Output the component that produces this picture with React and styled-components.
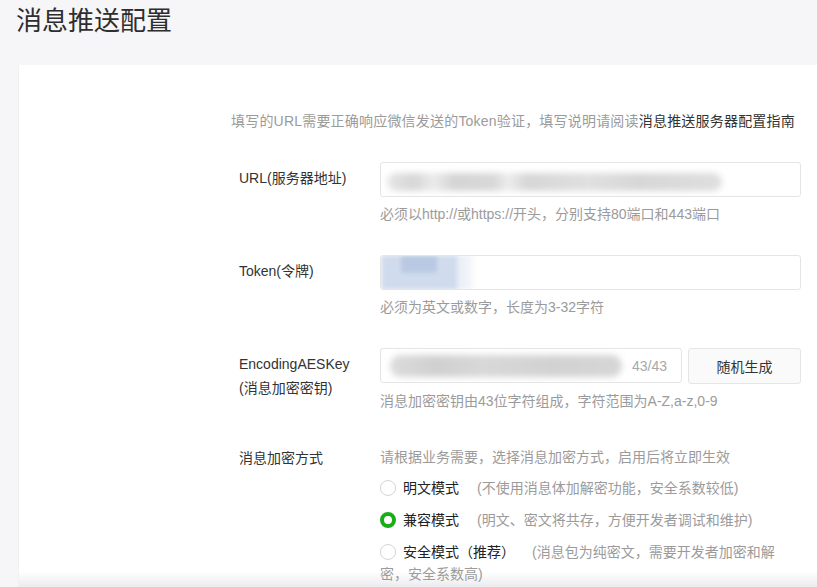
import React from 'react';
import styled, { createGlobalStyle } from 'styled-components';

const colors = {
  page: '#f6f6f8',
  text: '#333333',
  dark: '#222222',
  hint: '#9b9b9b',
  border: '#e5e5e5',
  green: '#1aad19',
};

const GlobalStyle = createGlobalStyle`
  html, body {
    margin: 0;
    padding: 0;
    background: ${colors.page};
    font-family: "Liberation Sans", "Noto Sans CJK SC", sans-serif;
    color: ${colors.text};
  }
`;

const modes = [
  { name: '明文模式', desc: '(不使用消息体加解密功能，安全系数较低)', checked: false, gap: 18 },
  { name: '兼容模式', desc: '(明文、密文将共存，方便开发者调试和维护)', checked: true, gap: 18 },
  {
    name: '安全模式（推荐）',
    desc: '(消息包为纯密文，需要开发者加密和解',
    rest: '密，安全系数高)',
    checked: false,
    gap: 17,
  },
];

const App = () => (
  <Page>
    <GlobalStyle />
    <Title>消息推送配置</Title>
    <Card>
      <Intro>
        填写的URL需要正确响应微信发送的Token验证，填写说明请阅读
        <Link>消息推送服务器配置指南</Link>
      </Intro>

      <Row>
        <Label>URL(服务器地址)</Label>
        <Field>
          <Input>
            <Blur $kind="url" />
          </Input>
          <Hint>必须以http://或https://开头，分别支持80端口和443端口</Hint>
        </Field>
      </Row>

      <Row>
        <Label>Token(令牌)</Label>
        <Field>
          <Input>
            <Blur $kind="token" />
          </Input>
          <Hint>必须为英文或数字，长度为3-32字符</Hint>
        </Field>
      </Row>

      <Row>
        <Label>
          EncodingAESKey
          <br />
          (消息加密密钥)
        </Label>
        <Field>
          <KeyLine>
            <Input $grow>
              <Blur $kind="key" />
              <Counter>43/43</Counter>
            </Input>
            <Button>随机生成</Button>
          </KeyLine>
          <Hint>消息加密密钥由43位字符组成，字符范围为A-Z,a-z,0-9</Hint>
        </Field>
      </Row>

      <Row $plain>
        <Label $plain>消息加密方式</Label>
        <Field>
          <Desc>请根据业务需要，选择消息加密方式，启用后将立即生效</Desc>
          {modes.map((m) => (
            <Option key={m.name}>
              <Radio $checked={m.checked} />
              <OptionName>{m.name}</OptionName>
              <OptionDesc style={{ marginLeft: m.gap }}>{m.desc}</OptionDesc>
              {m.rest && <OptionRest>{m.rest}</OptionRest>}
            </Option>
          ))}
        </Field>
      </Row>
    </Card>
  </Page>
);

export default App;

const Page = styled.div`
  width: 817px;
  height: 587px;
  overflow: hidden;
  background: ${colors.page};
`;

const Title = styled.h1`
  margin: 0;
  padding: 1px 0 0 16px;
  height: 65px;
  box-sizing: border-box;
  font-family: "Noto Sans CJK SC", sans-serif;
  font-size: 26px;
  font-weight: 400;
  line-height: 36px;
  color: #2e2e2e;
`;

const Card = styled.div`
  margin-left: 18px;
  min-height: 522px;
  padding: 46px 0 0 212px;
  box-sizing: border-box;
  background: linear-gradient(to bottom, #ffffff 0, #ffffff 506px, #ececf0 522px);
  border-left: 1px solid #f1f1f3;
`;

const Intro = styled.div`
  font-size: 14px;
  line-height: 20px;
  letter-spacing: 0.2px;
  color: ${colors.hint};
  white-space: nowrap;
`;

const Link = styled.span`
  color: ${colors.text};
`;

const Row = styled.div`
  display: grid;
  grid-template-columns: 141px 421px;
  margin: ${(p) => (p.$plain ? '36px' : '31px')} 0 0 8px;
`;

const Label = styled.div`
  padding-top: ${(p) => (p.$plain ? '1px' : '4px')};
  font-size: 14px;
  line-height: ${(p) => (p.$plain ? '20px' : '24px')};
  color: ${colors.text};
`;

const Field = styled.div`
  display: flex;
  flex-direction: column;
`;

const KeyLine = styled.div`
  display: flex;
  gap: 6px;
`;

const Input = styled.div`
  display: flex;
  align-items: center;
  flex: ${(p) => (p.$grow ? '1' : 'none')};
  height: 35px;
  box-sizing: border-box;
  border: 1px solid ${colors.border};
  border-radius: 3px;
  background: #fff;
  overflow: hidden;
`;

const Blur = styled.span`
  display: block;
  flex: none;
  ${(p) =>
    p.$kind === 'url' &&
    `
    width: 335px;
    height: 18px;
    margin: 4px 0 0 6px;
    border-radius: 9px;
    filter: blur(3px);
    background: linear-gradient(to right, #e6e6e6 0, #d6d6d6 8%, #ececec 14%, #d4d4d4 20%, #d8d8d8 32%, #ededed 36%, #d6d6d6 42%, #e0e0e0 60%, #d7d7d7 75%, #dedede 100%);
  `}
  ${(p) =>
    p.$kind === 'token' &&
    `
    width: 92px;
    height: 35px;
    filter: blur(2px);
    background:
      linear-gradient(to right, transparent 0, transparent 20px, #b9c9e3 20px, #b9c9e3 56px, transparent 56px),
      linear-gradient(to right, #d0dbed 0, #d0dbed 76px, #e9eef6 76px, #f4f6fa 100%);
    background-size: 100% 50%, 100% 100%;
    background-repeat: no-repeat;
  `}
  ${(p) =>
    p.$kind === 'key' &&
    `
    width: 232px;
    height: 22px;
    margin-left: 9px;
    border-radius: 11px;
    filter: blur(3px);
    background: linear-gradient(to right, #dcdcdc 0, #d0d0d0 20%, #d8d8d8 40%, #d2d2d2 70%, #d6d6d6 100%);
  `}
`;

const Counter = styled.span`
  margin-left: auto;
  margin-right: 14px;
  font-size: 14px;
  color: #a8a8a8;
`;

const Button = styled.div`
  display: flex;
  align-items: center;
  justify-content: center;
  width: 113px;
  height: 36px;
  box-sizing: border-box;
  border: 1px solid ${colors.border};
  border-radius: 3px;
  background: #fafafa;
  font-size: 14px;
  color: ${colors.text};
`;

const Hint = styled.div`
  margin-top: 7px;
  font-size: 14px;
  line-height: 20px;
  color: ${colors.hint};
  white-space: nowrap;
`;

const Desc = styled.div`
  font-size: 14px;
  line-height: 20px;
  color: ${colors.hint};
`;

const Option = styled.div`
  margin-top: 10px;
  font-size: 14px;
  line-height: 22px;
  color: ${colors.hint};
  white-space: nowrap;
`;

const Radio = styled.span`
  display: inline-block;
  width: 16px;
  height: 16px;
  box-sizing: border-box;
  margin-right: 7px;
  vertical-align: -3px;
  border-radius: 50%;
  border: ${(p) => (p.$checked ? `4px solid ${colors.green}` : '1px solid #d4d4d4')};
  background: #fff;
`;

const OptionName = styled.span`
  color: ${colors.dark};
`;

const OptionDesc = styled.span`
  color: ${colors.hint};
`;

const OptionRest = styled.div`
  color: ${colors.hint};
`;
